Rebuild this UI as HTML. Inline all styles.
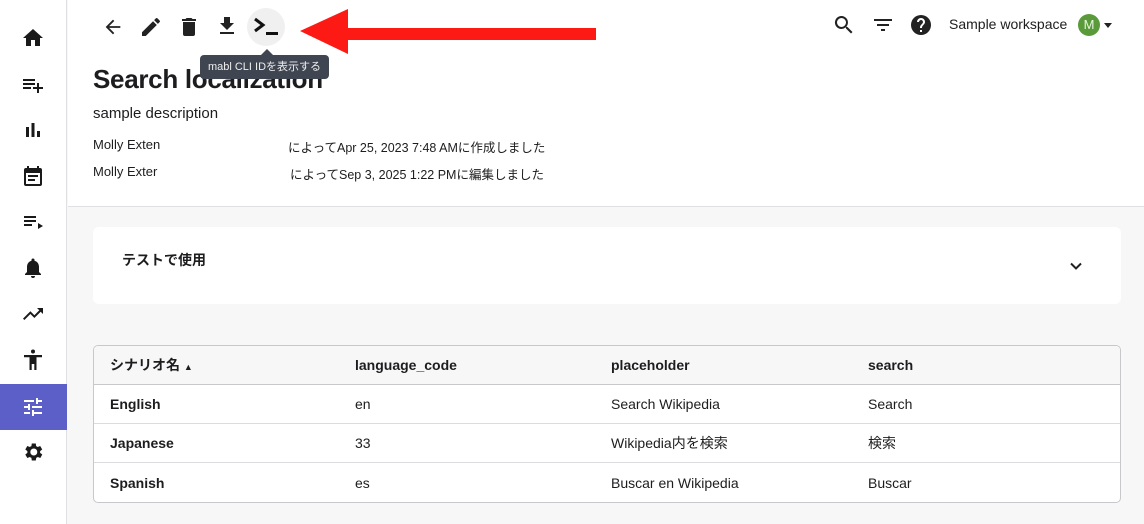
<!DOCTYPE html>
<html><head><meta charset="utf-8"><style>
*{box-sizing:border-box;margin:0;padding:0}
body{width:1144px;height:524px;overflow:hidden;background:#f7f7f8;font-family:"Liberation Sans","Noto Sans CJK JP",sans-serif;color:#1d1d1f;position:relative}
.side{position:absolute;left:0;top:0;width:67px;height:524px;background:#fff;border-right:1px solid #e0e0e3}
.side svg{position:absolute;left:21px;width:24px;height:24px;fill:#1a1a1a}
.active{position:absolute;left:0;top:384px;width:67px;height:46px;background:#5c5fc8}
.top{position:absolute;left:68px;top:0;width:1076px;height:207px;background:#fff;border-bottom:1px solid #e0e0e3}
.ic{position:absolute;fill:#222}
.t{position:absolute;white-space:nowrap}
.card{position:absolute;left:93px;top:227px;width:1028px;height:77px;background:#fff;border-radius:6px}
table{position:absolute;left:93px;top:345px;width:1028px;border:1px solid #c8c8cc;border-radius:5px;border-collapse:separate;border-spacing:0;background:#fff;font-size:14px;overflow:hidden}
td,th{height:39px;padding:0 16px;text-align:left;border-bottom:1px solid #dcdcdf}
tr:last-child td{border-bottom:none}
th{background:#f7f7f8;font-weight:bold;border-bottom:1px solid #c8c8cc}
</style></head><body>
<div class="side">
<svg style="top:26px" viewBox="0 0 24 24"><path d="M10 20v-6h4v6h5v-8h3L12 3 2 12h3v8z"/></svg>
<svg style="top:73px" viewBox="0 0 24 24"><path d="M2 6h12v2H2zM2 10h12v2H2zM2 14h8v2H2zM16 14v-4h2v4h4v2h-4v4h-2v-4h-4v-2z"/></svg>
<svg style="top:118px" viewBox="0 0 24 24"><path d="M5 9h3v10H5zM10.5 5h3v14h-3zM16 13h3v6h-3z"/></svg>
<svg style="top:164px" viewBox="0 0 24 24"><path d="M19 4h-1V2h-2v2H8V2H6v2H5a2 2 0 0 0-2 2v14a2 2 0 0 0 2 2h14a2 2 0 0 0 2-2V6a2 2 0 0 0-2-2zm0 16H5V9h14zM7 11h10v2H7zm0 4h7v2H7z"/></svg>
<svg style="top:210px" viewBox="0 0 24 24"><path d="M3 6h12v2H3zM3 10h12v2H3zM3 14h8v2H3zM17 13l5 3-5 3z"/></svg>
<svg style="top:256px" viewBox="0 0 24 24"><path d="M12 22a2 2 0 0 0 2-2h-4a2 2 0 0 0 2 2zm6-6v-5c0-3.1-1.6-5.6-4.5-6.3V4a1.5 1.5 0 0 0-3 0v.7C7.6 5.4 6 7.9 6 11v5l-2 2v1h16v-1z"/></svg>
<svg style="top:302px" viewBox="0 0 24 24"><path d="M16 6l2.3 2.3-4.9 4.9-4-4L2 16.6 3.4 18l6-6 4 4 6.3-6.3L22 12V6z"/></svg>
<svg style="top:348px" viewBox="0 0 24 24"><path d="M12 1.5a2 2 0 1 1 0 4 2 2 0 0 1 0-4zM3 7h18v2.2h-5.5V22h-2.2v-6h-2.6v6H8.5V9.2H3z"/></svg>
<div class="active"></div>
<svg style="top:395px;fill:#fff" viewBox="0 0 24 24"><path d="M3 17v2h6v-2zM3 5v2h10V5zm10 16v-2h8v-2h-8v-2h-2v6zM7 9v2H3v2h4v2h2V9zm14 4v-2H11v2zm-6-4h2V7h4V5h-4V3h-2z"/></svg>
<svg style="top:440px" viewBox="0 0 24 24"><path d="M19.1 12.9a7 7 0 0 0 0-1.8l2.1-1.6-2-3.5-2.5 1a7 7 0 0 0-1.6-.9L14.8 3.5h-4l-.4 2.6a7 7 0 0 0-1.6.9l-2.5-1-2 3.5 2.1 1.6a7 7 0 0 0 0 1.8l-2.1 1.6 2 3.5 2.5-1a7 7 0 0 0 1.6.9l.4 2.6h4l.4-2.6a7 7 0 0 0 1.6-.9l2.5 1 2-3.5zM12.8 15.5a3.5 3.5 0 1 1 0-7 3.5 3.5 0 0 1 0 7z"/></svg>
</div>
<div class="top"></div>
<svg class="ic" style="left:102px;top:16px" width="22" height="22" viewBox="0 0 24 24"><path d="M20 11H7.8l5.6-5.6L12 4l-8 8 8 8 1.4-1.4L7.8 13H20z"/></svg>
<svg class="ic" style="left:139px;top:15px" width="24" height="24" viewBox="0 0 24 24"><path d="M3 17.25V21h3.75L17.8 9.94l-3.75-3.75zM20.7 7.04a1 1 0 0 0 0-1.41l-2.34-2.34a1 1 0 0 0-1.41 0l-1.83 1.83 3.75 3.75z"/></svg>
<svg class="ic" style="left:177px;top:15px" width="24" height="24" viewBox="0 0 24 24"><path d="M6 19a2 2 0 0 0 2 2h8a2 2 0 0 0 2-2V7H6zM19 4h-3.5l-1-1h-5l-1 1H5v2h14z"/></svg>
<svg class="ic" style="left:215px;top:14px" width="24" height="24" viewBox="0 0 24 24"><path d="M19 9h-4V3H9v6H5l7 7zM5 18v2h14v-2z"/></svg>
<div style="position:absolute;left:247px;top:8px;width:38px;height:38px;border-radius:50%;background:#f0f0f1"></div>
<svg style="position:absolute;left:253px;top:16px" width="28" height="22" viewBox="0 0 28 22"><path d="M2 3l8 6-8 6" stroke="#111" stroke-width="3" fill="none"/><rect x="13" y="16" width="12" height="3" fill="#111"/></svg>
<svg style="position:absolute;left:298px;top:4px" width="300" height="52"><polygon points="2,27 50,5 50,50" fill="#fe1a14"/><rect x="48" y="24" width="250" height="12" fill="#fe1a14"/></svg>
<div class="t" style="left:93px;top:62px;font-size:26px;font-weight:bold;line-height:34px;letter-spacing:-0.3px">Search localization</div>
<div style="position:absolute;left:261px;top:49px;border:6px solid transparent;border-bottom-color:#3f4651;border-top:0"></div>
<div style="position:absolute;left:200px;top:55px;width:129px;height:24px;background:#3f4651;border-radius:4px;color:#eee;font-size:11px;line-height:24px;text-align:center">mabl CLI IDを表示する</div>
<div class="t" style="left:93px;top:105px;font-size:15px">sample description</div>
<div class="t" style="left:93px;top:137px;font-size:13px">Molly Exten</div>
<div class="t" style="left:288px;top:137px;font-size:12.5px">によってApr 25, 2023 7:48 AMに作成しました</div>
<div class="t" style="left:93px;top:164px;font-size:13px">Molly Exter</div>
<div class="t" style="left:290px;top:164px;font-size:12.5px">によってSep 3, 2025 1:22 PMに編集しました</div>
<svg class="ic" style="left:832px;top:13px" width="24" height="24" viewBox="0 0 24 24"><path d="M15.5 14h-.8l-.3-.3A6.5 6.5 0 1 0 9.5 16a6.5 6.5 0 0 0 4.2-1.6l.3.3v.8l5 5 1.5-1.5zm-6 0A4.5 4.5 0 1 1 14 9.5 4.5 4.5 0 0 1 9.5 14z"/></svg>
<svg class="ic" style="left:871px;top:13px" width="24" height="24" viewBox="0 0 24 24"><path d="M10 18h4v-2h-4zM3 6v2h18V6zm3 7h12v-2H6z"/></svg>
<svg class="ic" style="left:909px;top:13px" width="24" height="24" viewBox="0 0 24 24"><path d="M12 2a10 10 0 1 0 0 20 10 10 0 0 0 0-20zm1 17h-2v-2h2zm2.1-7.8l-.9.9C13.5 12.9 13 13.5 13 15h-2v-.5c0-1.1.4-2.1 1.2-2.8l1.2-1.3A2 2 0 1 0 10 9H8a4 4 0 1 1 8 0c0 .9-.4 1.7-.9 2.2z"/></svg>
<div class="t" style="left:949px;top:16px;font-size:14px">Sample workspace</div>
<div style="position:absolute;left:1078px;top:14px;width:22px;height:22px;border-radius:50%;background:#5a9a3a;color:#e8f5e0;font-size:13px;text-align:center;line-height:22px">M</div>
<div style="position:absolute;left:1104px;top:23px;border:4px solid transparent;border-top:5px solid #222;border-bottom:0"></div>
<div class="card"></div>
<div class="t" style="left:122px;top:250px;font-size:14px;font-weight:bold">テストで使用</div>
<svg style="position:absolute;left:1066px;top:256px" width="20" height="20" viewBox="0 0 24 24"><path d="M6 9l6 6 6-6" stroke="#222" stroke-width="2.4" fill="none"/></svg>
<table>
<tr><th style="width:245px">シナリオ名 <span style="font-size:9px">▲</span></th><th style="width:256px">language_code</th><th style="width:257px">placeholder</th><th>search</th></tr>
<tr><td style="font-weight:bold">English</td><td>en</td><td>Search Wikipedia</td><td>Search</td></tr>
<tr><td style="font-weight:bold">Japanese</td><td>33</td><td>Wikipedia内を検索</td><td>検索</td></tr>
<tr><td style="font-weight:bold">Spanish</td><td>es</td><td>Buscar en Wikipedia</td><td>Buscar</td></tr>
</table>
</body></html>
